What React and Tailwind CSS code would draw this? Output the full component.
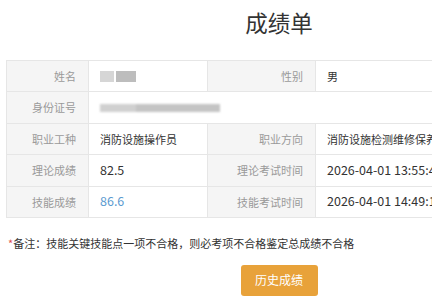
const rows = [
  [{ label: "姓名", blur: "name" }, { label: "性别", value: "男" }],
  [{ label: "身份证号", blur: "id", span: true }],
  [{ label: "职业工种", value: "消防设施操作员" }, { label: "职业方向", value: "消防设施检测维修保养" }],
  [{ label: "理论成绩", value: "82.5", num: true }, { label: "理论考试时间", value: "2026-04-01 13:55:42", num: true }],
  [{ label: "技能成绩", value: "86.6", num: true, blue: true }, { label: "技能考试时间", value: "2026-04-01 14:49:15", num: true }],
];

function Blurred({ kind }) {
  if (kind === "name") {
    return (
      <div className="flex items-center gap-[2px] blur-[0.6px]">
        <div className="w-[14px] h-[11px] bg-[#d6d6d6]" />
        <div className="w-[20px] h-[11px] bg-[#bdbdbd]" />
      </div>
    );
  }
  return (
    <div className="flex items-center blur-[1px]">
      <div className="w-[36px] h-[8px] bg-[#d0d0d0]" />
      <div className="w-[84px] h-[8px] bg-[#c4c4c4]" />
    </div>
  );
}

export default function App() {
  return (
    <div className="w-[432px] h-[308px] overflow-hidden bg-white font-['Noto_Sans_CJK_SC','Noto_Sans',sans-serif]">
      <div className="w-[546px] ml-[6px]">
        <div className="pt-[6px] h-[60px] text-center text-[22.5px] leading-[32px] text-[#333]">成绩单</div>

        <div className="border-t border-l border-[#e6e6e6]">
          {rows.map((row, i) => (
            <div key={i} className="flex h-[31.4px] border-b border-[#e6e6e6] text-[11px]">
              {row.map((cell, j) => (
                <div key={j} className={cell.span ? "flex flex-1" : "flex"}>
                  <div
                    className={
                      (j === 0 ? "w-[82px]" : "w-[108px]") +
                      " bg-[#f5f5f5] border-r border-[#e6e6e6] flex items-center justify-end pr-[12px] text-[#9a9a9a]"
                    }
                  >
                    {cell.label}
                  </div>
                  <div
                    className={
                      (cell.span ? "flex-1" : j === 0 ? "w-[119px]" : "w-[237px]") +
                      " flex items-center pl-[11px] border-r border-[#e6e6e6] whitespace-nowrap " +
                      (cell.num ? "text-[12.5px] " : "") +
                      (cell.blue ? "text-[#5b9bd0]" : "text-[#333]")
                    }
                  >
                    {cell.blur ? <Blurred kind={cell.blur} /> : cell.value}
                  </div>
                </div>
              ))}
            </div>
          ))}
        </div>

        <div className="mt-[15px] ml-[2px] text-[11px] leading-[20px] text-[#333]">
          <span className="text-[#e05050]">*</span>备注：技能关键技能点一项不合格，则必考项不合格鉴定总成绩不合格
        </div>

        <div className="mt-[12px] flex justify-center">
          <button className="w-[77px] h-[31px] rounded-[3px] bg-[#e8a23a] text-white text-[12px]">历史成绩</button>
        </div>
      </div>
    </div>
  );
}
